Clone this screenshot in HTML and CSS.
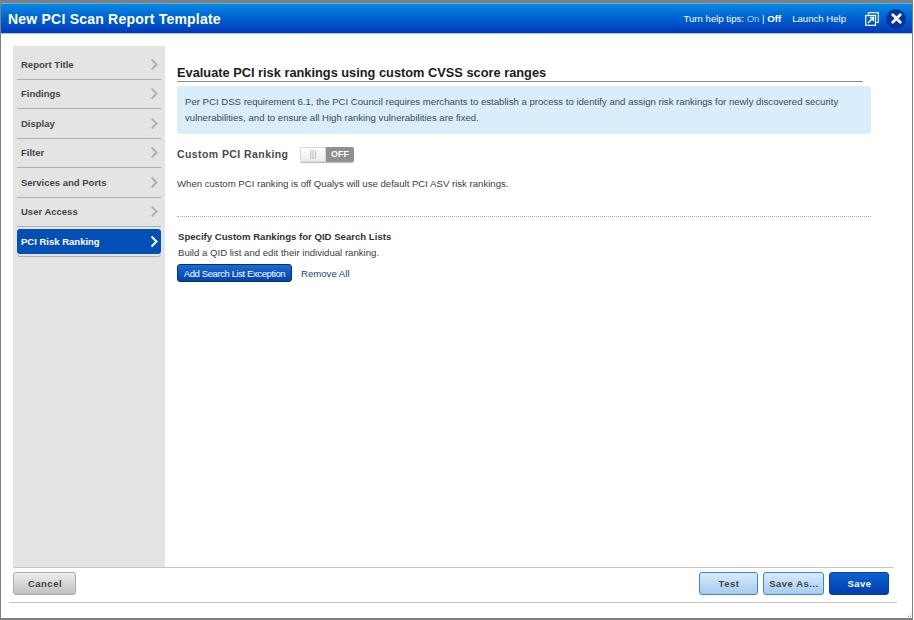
FILE: index.html
```html
<!DOCTYPE html>
<html lang="en">
<head>
    <meta charset="UTF-8">
    <title>New PCI Scan Report Template</title>
    <link rel="stylesheet" href="styles.css">
</head>
<body>
    <div class="window">
        <header class="title-bar">
            <h1>New PCI Scan Report Template</h1>
            <div class="title-tools">
                <span class="tips">Turn help tips: <span class="tips-on">On</span> | <b>Off</b></span>
                <a class="help-link">Launch Help</a>
                <svg class="popout" width="14" height="14" viewBox="0 0 14 14">
                    <path d="M3.5 3.5V.7h9.8v9.8h-2.8" fill="none" stroke="#e8f0ff" stroke-width="1.2"/>
                    <rect x=".7" y="3.5" width="9.8" height="9.8" fill="none" stroke="#fff" stroke-width="1.2"/>
                    <path d="M3 11l5-5M4.8 5.6h3.6v3.6" fill="none" stroke="#fff" stroke-width="1.5"/>
                </svg>
                <span class="close-btn">
                    <svg width="11" height="11" viewBox="0 0 11 11">
                        <path d="M1.8 1.8l7.4 7.4M9.2 1.8l-7.4 7.4" stroke="#fff" stroke-width="2.8" stroke-linecap="round"/>
                    </svg>
                </span>
            </div>
        </header>
        <div class="body-row">
            <nav class="side-nav">
                <a class="nav-item">Report Title<svg class="chev" width="8" height="13" viewBox="0 0 8 13"><path d="M1.5 1.5l5 5-5 5" fill="none" stroke="#b0b0b0" stroke-width="2"/></svg></a>
                <a class="nav-item">Findings<svg class="chev" width="8" height="13" viewBox="0 0 8 13"><path d="M1.5 1.5l5 5-5 5" fill="none" stroke="#b0b0b0" stroke-width="2"/></svg></a>
                <a class="nav-item">Display<svg class="chev" width="8" height="13" viewBox="0 0 8 13"><path d="M1.5 1.5l5 5-5 5" fill="none" stroke="#b0b0b0" stroke-width="2"/></svg></a>
                <a class="nav-item">Filter<svg class="chev" width="8" height="13" viewBox="0 0 8 13"><path d="M1.5 1.5l5 5-5 5" fill="none" stroke="#b0b0b0" stroke-width="2"/></svg></a>
                <a class="nav-item">Services and Ports<svg class="chev" width="8" height="13" viewBox="0 0 8 13"><path d="M1.5 1.5l5 5-5 5" fill="none" stroke="#b0b0b0" stroke-width="2"/></svg></a>
                <a class="nav-item">User Access<svg class="chev" width="8" height="13" viewBox="0 0 8 13"><path d="M1.5 1.5l5 5-5 5" fill="none" stroke="#b0b0b0" stroke-width="2"/></svg></a>
                <a class="nav-item active">PCI Risk Ranking<svg class="chev" width="8" height="13" viewBox="0 0 8 13"><path d="M1.5 1.5l5 5-5 5" fill="none" stroke="#fff" stroke-width="2"/></svg></a>
            </nav>
            <main class="content">
                <h2>Evaluate PCI risk rankings using custom CVSS score ranges</h2>
                <div class="info-box">Per PCI DSS requirement 6.1, the PCI Council requires merchants to establish a process to identify and assign risk rankings for newly discovered security vulnerabilities, and to ensure all High ranking vulnerabilities are fixed.</div>
                <div class="toggle-row">
                    <span class="toggle-label">Custom PCI Ranking</span>
                    <span class="toggle">
                        <span class="toggle-knob">|||</span>
                        <span class="toggle-off">OFF</span>
                    </span>
                </div>
                <p class="note">When custom PCI ranking is off Qualys will use default PCI ASV risk rankings.</p>
                <div class="divider"></div>
                <h3>Specify Custom Rankings for QID Search Lists</h3>
                <p class="sub-note">Build a QID list and edit their individual ranking.</p>
                <div class="action-row">
                    <button class="btn-add">Add Search List Exception</button>
                    <a class="remove-link">Remove All</a>
                </div>
            </main>
        </div>
        <footer class="footer">
            <div class="footer-buttons">
                <button class="btn btn-cancel">Cancel</button>
                <div class="footer-right">
                    <button class="btn btn-light btn-test">Test</button>
                    <button class="btn btn-light btn-saveas">Save As...</button>
                    <button class="btn btn-save">Save</button>
                </div>
            </div>
            <div class="footer-line"></div>
        </footer>
        <svg class="resize-grip" width="5" height="5" viewBox="0 0 5 5">
            <path d="M3 1h1v1H3zM1 3h1v1H1zM3 3h1v1H3z" fill="#9a9a9a"/>
        </svg>
    </div>
</body>
</html>
```

FILE: styles.css
```css
html, body {
    height: 100%;
}
body {
    margin: 0;
    font-family: "Liberation Sans", Arial, sans-serif;
    background-color: #fff;
    overflow: hidden;
}
.window {
    position: relative;
    box-sizing: border-box;
    width: 913px;
    height: 620px;
    display: flex;
    flex-direction: column;
    border: 1px solid #7f7f7f;
    border-top-width: 3px;
    border-bottom-width: 2px;
}
.title-bar {
    flex: none;
    height: 31px;
    box-sizing: border-box;
    display: flex;
    align-items: center;
    justify-content: space-between;
    padding: 0 6px 0 7px;
    background: linear-gradient(#0a8ae0, #0070d8 30%, #0038b8);
    border-top: 1px solid #5fb0ea;
    border-bottom: 1px solid #a9c4ec;
    color: #fff;
}
.title-bar h1 {
    margin: 0;
    font-size: 14px;
    font-weight: bold;
    letter-spacing: 0.22px;
}
.title-tools {
    display: flex;
    align-items: center;
    font-size: 9.6px;
}
.tips-on {
    color: #a9c6ea;
}
.help-link {
    margin-left: 11px;
}
.popout {
    margin-left: 19px;
}
.close-btn {
    display: flex;
    align-items: center;
    justify-content: center;
    width: 20px;
    height: 20px;
    margin-left: 7px;
    border-radius: 50%;
    background-color: #04339a;
}
.body-row {
    flex: 1;
    min-height: 0;
    display: flex;
    margin: 12px 19px 0 12px;
    border-bottom: 1px solid #c4c4c4;
}
.side-nav {
    flex: none;
    box-sizing: border-box;
    width: 152px;
    padding: 4px 4px 0;
    background-color: #e4e4e4;
}
.nav-item {
    display: flex;
    align-items: center;
    justify-content: space-between;
    box-sizing: border-box;
    height: 29.5px;
    padding: 0 3px 0 4px;
    border-bottom: 1px solid #b0b0b0;
    font-size: 9.5px;
    font-weight: bold;
    color: #444;
}
.nav-item.active {
    height: 25px;
    margin-top: 2px;
    border-bottom: none;
    border-radius: 3px;
    background-color: #024fb5;
    color: #fff;
    box-shadow: 0 2px 0 #e4e4e4, 0 3px 0 #b0b0b0;
}
.content {
    flex: 1;
    min-width: 0;
    padding: 18px 22px 0 12px;
}
.content h2 {
    margin: 0 8px 0 0;
    height: 17px;
    border-bottom: 1px solid #8a8a8a;
    font-size: 12.8px;
    line-height: 17px;
    font-weight: bold;
    color: #1c1c1c;
}
.info-box {
    margin: 4px 0 0;
    box-sizing: border-box;
    height: 48px;
    padding: 8px 8px 0;
    border-radius: 4px;
    background-color: #d9edfb;
    font-size: 9.6px;
    line-height: 15.5px;
    color: #3e4a55;
}
.toggle-row {
    display: flex;
    align-items: center;
    margin-top: 13px;
}
.toggle-label {
    flex: none;
    width: 123px;
    margin-top: -1px;
    font-size: 10.5px;
    font-weight: bold;
    color: #4a4a4a;
    letter-spacing: 0.42px;
}
.toggle {
    display: flex;
    height: 15px;
    width: 54px;
    border-radius: 2px;
    overflow: hidden;
    font-size: 9px;
    font-weight: bold;
    box-shadow: 0 1px 1px #bbb;
}
.toggle-knob {
    flex: none;
    width: 26px;
    box-sizing: border-box;
    border: 1px solid #d8d8d8;
    background: linear-gradient(#fff, #ececec);
    color: #aaa;
    font-weight: normal;
    text-align: center;
    line-height: 13px;
}
.toggle-off {
    flex: 1;
    background-color: #918f8f;
    color: #fff;
    text-align: center;
    line-height: 15px;
}
.note {
    margin: 15px 0 0;
    font-size: 9.6px;
    line-height: 14px;
    color: #3c3c3c;
}
.divider {
    margin-top: 25px;
    border-top: 1px dotted #a8a8a8;
}
.content h3 {
    margin: 14px 0 0 1px;
    font-size: 9.6px;
    line-height: 12px;
    font-weight: bold;
    color: #333;
}
.sub-note {
    margin: 4px 0 0 1px;
    font-size: 9.6px;
    line-height: 12px;
    color: #3c3c3c;
}
.action-row {
    display: flex;
    align-items: center;
    margin-top: 5px;
}
.btn-add {
    box-sizing: border-box;
    width: 115px;
    height: 18px;
    padding: 0;
    border: 1px solid #0b2f6e;
    border-radius: 3px;
    background: linear-gradient(#1a6ad0, #0043ae);
    color: #fff;
    font-family: inherit;
    font-size: 9.5px;
    letter-spacing: -0.4px;
    white-space: nowrap;
}
.remove-link {
    margin: 0 0 0 9px;
    font-size: 9.6px;
    color: #173f7e;
}
.footer {
    flex: none;
    height: 50px;
}
.footer-buttons {
    display: flex;
    justify-content: space-between;
    align-items: center;
    margin: 4px 23px 0 12px;
}
.footer-right {
    display: flex;
    gap: 5px;
}
.btn {
    box-sizing: border-box;
    height: 23px;
    width: 63px;
    padding: 0 0 0 1px;
    border-radius: 3px;
    font-family: inherit;
    font-size: 9.5px;
    font-weight: bold;
    letter-spacing: 0.5px;
    white-space: nowrap;
}
.btn-cancel {
    border: 1px solid #aaa;
    background: linear-gradient(#ededed, #c0c0c0);
    color: #444;
}
.btn-light {
    border: 1px solid #3a8ac8;
    background: linear-gradient(#d8ebfb, #a4cbf0);
    color: #444;
}
.btn-test {
    width: 59px;
}
.btn-saveas {
    width: 61px;
}
.btn-save {
    width: 60px;
    border: 1px solid #0a3ea6;
    background: linear-gradient(#0a62d2, #003eae);
    color: #fff;
}
.footer-line {
    margin: 7px 15px 0 8px;
    border-top: 1px solid #c4c4c4;
}
.resize-grip {
    position: absolute;
    right: 0;
    bottom: 0;
}
```
